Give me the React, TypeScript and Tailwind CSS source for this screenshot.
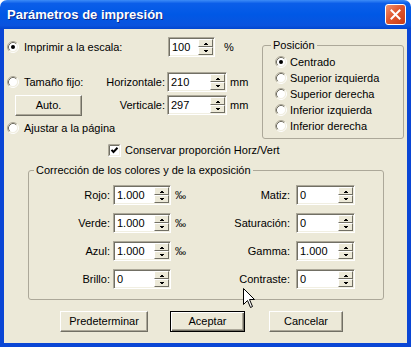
import React from "react";

function Radio({ checked }: { checked?: boolean }) {
  return (
    <svg width="12" height="12" viewBox="0 0 12 12" className="shrink-0">
      <circle cx="6" cy="6" r="4.5" fill="#fff" />
      <path d="M2.11 9.89 A5.5 5.5 0 0 1 9.89 2.11" fill="none" stroke="#aca899" />
      <path d="M9.89 2.11 A5.5 5.5 0 0 1 2.11 9.89" fill="none" stroke="#fff" />
      <path d="M2.82 9.18 A4.5 4.5 0 0 1 9.18 2.82" fill="none" stroke="#716f64" />
      <path d="M9.18 2.82 A4.5 4.5 0 0 1 2.82 9.18" fill="none" stroke="#f1efe2" />
      {checked && <circle cx="6" cy="6" r="2" fill="#000" />}
    </svg>
  );
}

function Checkbox() {
  return (
    <svg width="13" height="13" viewBox="0 0 13 13" className="shrink-0">
      <rect x="0" y="0" width="13" height="13" fill="#fff" />
      <path d="M0.5 12.5 V0.5 H12.5" fill="none" stroke="#aca899" />
      <path d="M1.5 11.5 V1.5 H11.5" fill="none" stroke="#716f64" />
      <path d="M0.5 12.5 H12.5 V0.5" fill="none" stroke="#fff" />
      <path d="M1.5 11.5 H11.5 V1.5" fill="none" stroke="#f1efe2" />
      <polyline points="3.5,5.8 5.5,8 9.5,3.8" fill="none" stroke="#000" strokeWidth="2" />
    </svg>
  );
}

function SpinBtn({ up }: { up?: boolean }) {
  return (
    <div className="flex h-[8px] items-center justify-center border border-t-white border-l-white border-b-[#716f64] border-r-[#716f64] bg-[#ece9d8]">
      <svg width="5" height="3" viewBox="0 0 5 3" shapeRendering="crispEdges">
        {up ? <polygon points="0,3 2.5,0.5 5,3" fill="#000" /> : <polygon points="0,0 5,0 2.5,2.5" fill="#000" />}
      </svg>
    </div>
  );
}

function Spin({ value, w }: { value: string; w: string }) {
  return (
    <div
      className={`flex h-[20px] shrink-0 border border-t-[#aca899] border-l-[#aca899] border-b-white border-r-white bg-white p-px shadow-[inset_1px_1px_0_#716f64,inset_-1px_-1px_0_#f1efe2] ${w}`}
    >
      <div className="flex-1 pl-[2px] leading-[16px]">{value}</div>
      <div className="flex w-[15px] flex-col">
        <SpinBtn up />
        <SpinBtn />
      </div>
    </div>
  );
}

function Btn({ label, w, def }: { label: string; w: string; def?: boolean }) {
  return (
    <div
      className={
        def
          ? `flex h-[21px] items-center justify-center border border-black bg-[#ece9d8] shadow-[inset_1px_1px_0_#fff,inset_-1px_-1px_0_#716f64,inset_-2px_-2px_0_#aca899] ${w}`
          : `flex h-[21px] items-center justify-center border border-t-white border-l-white border-b-[#716f64] border-r-[#716f64] bg-[#ece9d8] shadow-[inset_-1px_-1px_0_#aca899] ${w}`
      }
    >
      {label}
    </div>
  );
}

const posiciones = ["Centrado", "Superior izquierda", "Superior derecha", "Inferior izquierda", "Inferior derecha"];

const filas = [
  { l: "Rojo:", v: "1.000", u: "‰", r: "Matiz:", rv: "0" },
  { l: "Verde:", v: "1.000", u: "‰", r: "Saturación:", rv: "0" },
  { l: "Azul:", v: "1.000", u: "‰", r: "Gamma:", rv: "1.000" },
  { l: "Brillo:", v: "0", u: "", r: "Contraste:", rv: "0" },
];

export default function App() {
  return (
    <div className="relative flex h-[347px] w-[411px] flex-col bg-white font-['Liberation_Sans',Arial,sans-serif] text-[11px] leading-[15px] text-black">
      {/* barra de título */}
      <div className="flex h-[29px] shrink-0 items-center justify-between rounded-t-[7px] bg-[linear-gradient(to_bottom,#3d8cf7_0%,#0b5ee9_12%,#0058e6_50%,#0a53de_88%,#0245cf_100%)] pl-[7px] pr-[5px]">
        <span className="text-[13px] font-bold text-white [text-shadow:1px_1px_0_#0f2a8a]">
          Parámetros de impresión
        </span>
        <div className="flex h-[21px] w-[21px] items-center justify-center rounded-[3px] border border-white bg-[linear-gradient(135deg,#ee9473_0%,#e0572f_45%,#c93c14_100%)]">
          <svg width="11" height="11" viewBox="0 0 11 11">
            <path d="M1.5 1.5 L9.5 9.5 M9.5 1.5 L1.5 9.5" stroke="#fff" strokeWidth="2" strokeLinecap="square" />
          </svg>
        </div>
      </div>

      <div className="flex flex-1 flex-col border-x-4 border-b-4 border-[#0a46d5] bg-[#ece9d8]">
        <div className="flex h-[110px]">
          <div className="flex w-[254px] flex-col">
            <div className="mt-[8px] flex h-[20px] items-center">
              <div className="flex w-[164px] items-center pl-[3px]">
                <Radio checked />
                <span className="ml-[5px]">Imprimir a la escala:</span>
              </div>
              <Spin value="100" w="w-[47px]" />
              <span className="ml-[9px]">%</span>
            </div>
            <div className="mt-[15px] flex h-[20px] items-center">
              <div className="flex w-[163px] items-center pl-[3px]">
                <Radio />
                <span className="ml-[5px]">Tamaño fijo:</span>
                <span className="flex-1 pr-[2px] text-right">Horizontale:</span>
              </div>
              <Spin value="210" w="w-[60px]" />
              <span className="ml-[3px]">mm</span>
            </div>
            <div className="mt-[3px] flex h-[20px] items-center">
              <div className="flex w-[163px] items-center">
                <div className="ml-[11px]">
                  <Btn label="Auto." w="w-[67px]" />
                </div>
                <span className="flex-1 pr-[2px] text-right">Verticale:</span>
              </div>
              <Spin value="297" w="w-[60px]" />
              <span className="ml-[3px]">mm</span>
            </div>
            <div className="mt-[3px] flex h-[20px] items-center pl-[3px]">
              <Radio />
              <span className="ml-[5px]">Ajustar a la página</span>
            </div>
          </div>

          <fieldset className="ml-[4px] mt-[9px] h-[101px] w-[142px] rounded-[3px] border border-[#aca899]">
            <legend className="ml-[8px] px-[2px]">Posición</legend>
            <div className="flex flex-col pt-px">
              {posiciones.map((p, i) => (
                <div key={p} className="flex h-[16px] items-center pl-[12px]">
                  <Radio checked={i === 0} />
                  <span className="ml-[3px]">{p}</span>
                </div>
              ))}
            </div>
          </fieldset>
        </div>

        <div className="mt-px flex h-[20px] items-center pl-[104px]">
          <Checkbox />
          <span className="ml-[4px]">Conservar proporción Horz/Vert</span>
        </div>

        <fieldset className="ml-[24px] mt-[3px] h-[137px] w-[356px] rounded-[3px] border border-[#aca899]">
          <legend className="ml-[5px] px-[2px]">Corrección de los colores y de la exposición</legend>
          <div className="flex flex-col gap-[8px] pt-[7px]">
            {filas.map((f) => (
              <div key={f.l} className="flex h-[20px] items-center">
                <span className="w-[81px] text-right">{f.l}</span>
                <div className="ml-[3px]">
                  <Spin value={f.v} w="w-[58px]" />
                </div>
                <span className="ml-[4px] w-[40px]">{f.u}</span>
                <span className="w-[75px] text-right">{f.r}</span>
                <div className="ml-[6px]">
                  <Spin value={f.rv} w="w-[59px]" />
                </div>
              </div>
            ))}
          </div>
        </fieldset>

        <div className="mt-[11px] flex h-[21px] pl-[56px]">
          <Btn label="Predeterminar" w="w-[88px]" />
          <div className="ml-[22px]">
            <Btn label="Aceptar" w="w-[75px]" def />
          </div>
          <div className="ml-[24px]">
            <Btn label="Cancelar" w="w-[74px]" />
          </div>
        </div>
      </div>

      {/* puntero del ratón */}
      <svg className="absolute left-[243px] top-[288px]" width="13" height="21" viewBox="0 0 13 21">
        <path d="M0.5 0.5 L0.5 16.5 L4.5 12.5 L7.5 19.5 L9.5 18.5 L6.5 11.5 L11.5 11.5 Z" fill="#fff" stroke="#000" strokeLinejoin="miter" />
      </svg>
    </div>
  );
}
